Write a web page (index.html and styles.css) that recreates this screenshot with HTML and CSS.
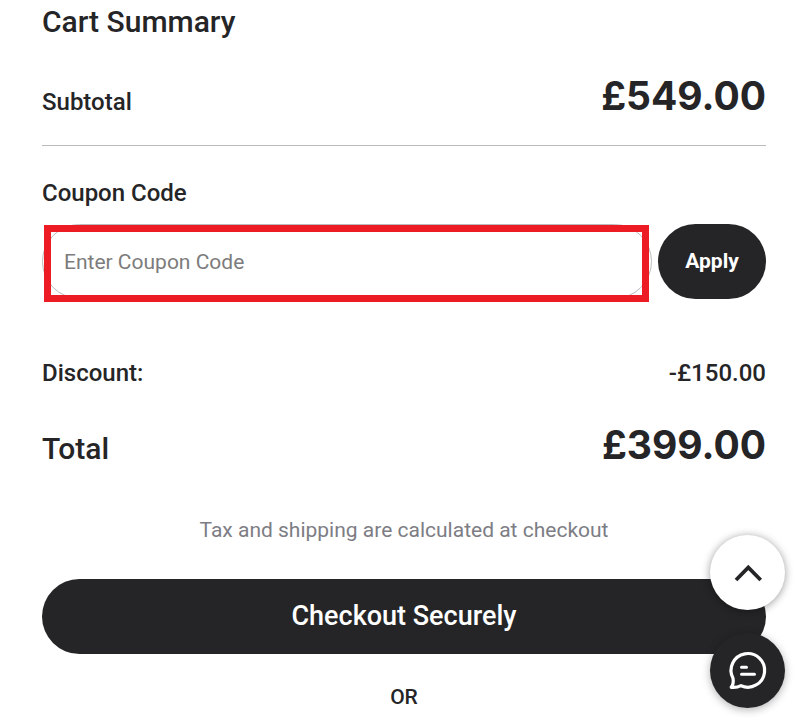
FILE: index.html
```html
<!DOCTYPE html>
<html lang="en">
<head>
  <meta charset="UTF-8">
  <title>Cart Summary</title>
  <meta name="viewport" content="width=device-width, initial-scale=1">
  <link rel="stylesheet" href="styles.css">
</head>
<body>

  <main class="summary">
    <h1 class="title">Cart Summary</h1>

    <div class="row subtotal">
      <span class="label">Subtotal</span>
      <span class="price">£549.00</span>
    </div>

    <form class="coupon">
      <label class="label" for="coupon">Coupon Code</label>
      <div class="coupon-row">
        <div class="coupon-field">
          <input class="coupon-input" id="coupon" type="text" placeholder="Enter Coupon Code">
          <span class="highlight"></span>
        </div>
        <button class="apply" type="button">Apply</button>
      </div>
    </form>

    <div class="row discount">
      <span class="label">Discount:</span>
      <span class="label">-£150.00</span>
    </div>

    <div class="row total">
      <span class="total-label">Total</span>
      <span class="price">£399.00</span>
    </div>

    <p class="note">Tax and shipping are calculated at checkout</p>
    <button class="checkout" type="button">Checkout Securely</button>
    <p class="or">OR</p>
  </main>

  <!-- floating buttons -->
  <div class="floating">
    <button class="round to-top" type="button" aria-label="Back to top">
      <svg width="75" height="75" viewBox="0 0 75 75" fill="none" stroke="#252527" stroke-width="3.800">
        <path d="M26 45L38.300 32.500L50.700 45"/>
      </svg>
    </button>
    <button class="round chat" type="button" aria-label="Chat">
      <svg width="75" height="75" viewBox="0 0 75 75" fill="none" stroke="#fff" stroke-width="3.200" stroke-linecap="round" stroke-linejoin="round">
        <path d="M21.200 54.300Q24 50.500 23 45.200A16.800 16.800 0 1 1 31 52.700Q26.500 55 21.200 54.300Z"/>
        <path d="M31.500 34.300H36.500M31.500 41.200H44.500" stroke-width="3"/>
      </svg>
    </button>
  </div>

</body>
</html>
```

FILE: styles.css
```css
* {
  box-sizing: border-box;
}

body {
  margin: 0;
  background-color: #fff;
  color: #252527;
  font-family: Roboto, "Liberation Sans", sans-serif;
  overflow-x: hidden;
}

button {
  padding: 0;
  border: 0;
  font-family: inherit;
  cursor: pointer;
}

.summary {
  padding: 0 44px 0 42px;
}

.title,
.total-label {
  margin: 0;
  font-size: 30px;
  font-weight: 500;
  line-height: 44px;
}

.label {
  font-size: 24px;
  font-weight: 500;
  line-height: 32px;
}

.row {
  display: flex;
  justify-content: space-between;
  align-items: baseline;
}

.price {
  font-family: Inter, sans-serif;
  font-size: 39px;
  font-weight: 700;
  line-height: 48px;
}

.subtotal {
  padding: 28px 0 25px;
  border-bottom: 1px solid #bbb;
}

.coupon {
  padding-top: 31px;
}

.coupon .label {
  display: block;
}

.coupon-row {
  display: flex;
  gap: 6px;
  margin-top: 15px;
}

.coupon-field {
  position: relative;
  flex: 1;
}

.coupon-input {
  display: block;
  width: 100%;
  height: 75px;
  padding: 0 21px;
  border: 1px solid #bbb;
  border-radius: 38px;
  font-family: inherit;
  font-size: 21px;
  color: #252527;
}

.coupon-input::placeholder {
  color: #7c7c7c;
}

/* red frame over the coupon field */
.highlight {
  position: absolute;
  top: 1px;
  right: 3px;
  bottom: -3px;
  left: 2px;
  border: 7px solid #ed1c24;
  pointer-events: none;
}

.apply,
.checkout {
  height: 75px;
  padding-bottom: 2px;
  border-radius: 38px;
  background-color: #252527;
  color: #fff;
}

.apply {
  width: 108px;
  font-size: 21px;
  font-weight: 700;
}

.discount {
  padding-top: 58px;
}

.total {
  padding-top: 32px;
}

.note {
  margin: 43px 0 33px;
  color: #7d7d84;
  font-size: 21px;
  line-height: 32px;
  text-align: center;
}

.checkout {
  display: block;
  width: 100%;
  font-size: 27px;
  font-weight: 500;
}

.or {
  margin: 27px 0 0;
  font-size: 21px;
  font-weight: 500;
  line-height: 32px;
  text-align: center;
}

.floating {
  position: fixed;
  right: 25px;
  bottom: 13px;
  display: flex;
  flex-direction: column;
  gap: 23px;
}

.round {
  width: 75px;
  height: 75px;
  border-radius: 50%;
}

.round svg {
  display: block;
}

.to-top {
  background-color: #fff;
  box-shadow: 0 1px 8px rgba(0, 0, 0, 0.4);
}

.chat {
  background-color: #252527;
  box-shadow: 0 2px 8px rgba(0, 0, 0, 0.3);
}
```
